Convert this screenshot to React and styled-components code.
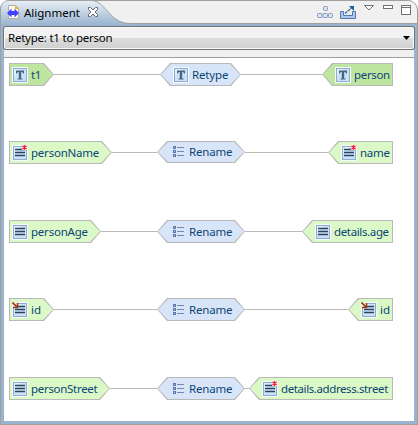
import React from "react";
import styled, { createGlobalStyle } from "styled-components";

const Global = createGlobalStyle`
  * { box-sizing: border-box; }
  body { margin: 0; background: #fff; overflow: hidden; }
  svg { display: block; flex: none; }
`;

const Frame = styled.main`
  width: 418px;
  height: 425px;
  display: flex;
  flex-direction: column;
  padding: 0 3px 3px;
  border: 1px solid #a0a0a0;
  border-top: 0;
  border-radius: 9px 10px 0 0;
  background: #99b4d1;
  font: 11.5px/16px "Noto Sans", "Open Sans", sans-serif;
  overflow: hidden;
`;

const Header = styled.header`
  height: 24px;
  flex: none;
  margin: 0 -3px;
  display: flex;
  justify-content: space-between;
  background: #f0f0f0;
  border-top: 1px solid #a0a0a0;
  border-bottom: 1px solid #a0a0a0;
  border-radius: 8px 9px 0 0;
`;

const Tab = styled.div`
  position: relative;
  display: flex;
  width: 132px;
  height: 23px;
  padding: 4px 0 0 6px;
`;

const TabShape = styled.svg`
  position: absolute;
  left: -1px;
  top: -1px;
`;

const TabIcon = styled.svg`
  position: relative;
`;

const TabTitle = styled.span`
  position: relative;
  width: 57px;
  margin: 0 6px 0 4px;
  white-space: nowrap;
`;

const Tools = styled.nav`
  display: flex;
`;

const Combo = styled.div`
  height: 24px;
  flex: none;
  margin: 2px -1px 0;
  padding: 0 4px 0 4px;
  display: flex;
  align-items: center;
  justify-content: space-between;
  border: 1px solid #707070;
  border-radius: 3px;
  box-shadow: inset 0 0 0 1px #fafafa;
  background: linear-gradient(#f2f2f2 0 48%, #dddddd 52%, #cfcfcf);
  color: #000;
`;

const ComboText = styled.span`
  letter-spacing: -0.23px;
`;

const Strip = styled.div`
  height: 8px;
  flex: none;
  background: #f0f0f0;
  border-bottom: 1px solid #a0a0a0;
`;

const Canvas = styled.section`
  flex: 1;
  display: grid;
  grid-template-rows: 78px 79px 78px 79px 23px;
  align-content: start;
  padding: 5px 21px 0 5px;
  background: #fff;
`;

const Row = styled.div`
  display: flex;
  align-items: flex-start;
`;

const Line = styled.i`
  flex: 1;
  height: 0;
  margin-top: 11px;
  border-top: 1px ${(p) => (p.$dashed ? "dashed" : "solid")} #b9b9b9;
`;

const outlines = {
  left: "polygon(0 0, calc(100% - 10px) 0, 100% 50%, calc(100% - 10px) 100%, 0 100%)",
  middle:
    "polygon(10px 0, calc(100% - 10px) 0, 100% 50%, calc(100% - 10px) 100%, 10px 100%, 0 50%)",
  right: "polygon(10px 0, 100% 0, 100% 100%, 10px 100%, 0 50%)",
};

const fills = { type: "#bfe6a0", property: "#dbf9c7", cell: "#d8e5f9" };
const starts = { left: 3, middle: 13, right: 13 };

const Node = styled.div`
  position: relative;
  flex: none;
  display: flex;
  align-items: center;
  width: ${(p) => p.$width}px;
  height: ${(p) => p.$height || 23}px;
  padding-left: ${(p) => starts[p.$side]}px;
  background: #b9b9b9;
  clip-path: ${(p) => outlines[p.$side]};
  color: #0d4575;

  &::before {
    content: "";
    position: absolute;
    inset: 1px;
    background: ${(p) => fills[p.$fill]};
    clip-path: ${(p) => outlines[p.$side]};
  }
`;

const NodeIcon = styled.svg`
  position: relative;
`;

const Label = styled.span`
  position: relative;
  margin-left: 3px;
  white-space: nowrap;
  letter-spacing: ${(p) => p.$spacing}px;
`;

function Glyph({ kind }) {
  if (kind === "list") {
    return (
      <NodeIcon width="16" height="16" shapeRendering="crispEdges">
        {[2, 6, 10].map((y) => (
          <React.Fragment key={y}>
            <rect x="3" y={y} width="3" height="3" fill="#5c78ac" />
            <rect x="4" y={y + 1} width="1" height="1" fill="#a9bfe0" />
            <rect x="7" y={y + 1} width="7" height="1" fill="#7189b6" />
          </React.Fragment>
        ))}
      </NodeIcon>
    );
  }
  return (
    <NodeIcon width="16" height="16">
      <rect width="16" height="16" fill="#f9fcff" />
      <rect x="1.5" y="1.5" width="13" height="13" fill="#cce2f7" stroke="#8fabd2" />
      <path d="M2 2H9L2 9Z" fill="#e3f0fc" />
      {kind === "type" ? (
        <path
          d="M4 3.5H12V6.5H11L10.3 4.9H9.2V11.5H10.5V12.5H5.5V11.5H6.8V4.9H5.7L5 6.5H4Z"
          fill="#456683"
        />
      ) : (
        <path d="M3 4.5H13M3 7.5H13M3 10.5H13" stroke="#2c435f" strokeWidth="1.5" />
      )}
      {kind === "required" && (
        <g>
          <rect x="10" y="0" width="6" height="5" fill="#ffe8ec" />
          <path d="M12.5 0V5M10.4 1L14.6 4M14.6 1L10.4 4" stroke="#ef2140" strokeWidth="1.2" />
        </g>
      )}
      {kind === "attribute" && (
        <g>
          <path d="M0 0H6V6H0Z" fill="#f7eee6" />
          <path d="M.5 .5L5 5M1 5.5H5.5V1" fill="none" stroke="#963b13" strokeWidth="1.6" />
        </g>
      )}
    </NodeIcon>
  );
}

const spacings = {
  t1: -0.4,
  Retype: -0.17,
  Rename: -0.2,
  person: -0.33,
  personName: -0.22,
  personAge: -0.22,
  personStreet: -0.3,
  name: -0.3,
  "details.age": -0.36,
  "details.address.street": -0.4,
};

function Part({ side, fill, width, height, icon, text }) {
  return (
    <Node $side={side} $fill={fill} $width={width} $height={height}>
      <Glyph kind={icon} />
      <Label $spacing={spacings[text] || 0}>{text}</Label>
    </Node>
  );
}

const rows = [
  { fill: "type", left: ["t1", "type", 45], cell: ["Retype", "type", 81], right: ["person", "type", 71] },
  { fill: "property", left: ["personName", "required", 103], cell: ["Rename", "list", 88, 22], right: ["name", "required", 65] },
  { fill: "property", left: ["personAge", "property", 92], cell: ["Rename", "list", 88], right: ["details.age", "property", 91] },
  { fill: "property", left: ["id", "attribute", 45], cell: ["Rename", "list", 88], right: ["id", "attribute", 45] },
  { fill: "property", left: ["personStreet", "property", 101], cell: ["Rename", "list", 88], right: ["details.address.street", "required", 144], dashed: true },
];

const Lead = styled.div`
  display: flex;
  width: ${(p) => p.$width}px;
`;

function Mapping({ row }) {
  const { left, cell, right, fill, dashed } = row;
  return (
    <Row>
      <Lead $width={cell[0] === "Retype" ? 151 : 148}>
        <Part side="left" fill={fill} text={left[0]} icon={left[1]} width={left[2]} />
        <Line />
      </Lead>
      <Part side="middle" fill="cell" text={cell[0]} icon={cell[1]} width={cell[2]} height={cell[3]} />
      <Line $dashed={dashed} />
      <Part side="right" fill={fill} text={right[0]} icon={right[1]} width={right[2]} />
    </Row>
  );
}

export default function App() {
  return (
    <>
      <Global />
      <Frame>
        <Header>
          <Tab>
            <TabShape width="134" height="25">
              <defs>
                <linearGradient id="tab" x2="0" y2="1">
                  <stop stopColor="#e9eff6" />
                  <stop offset="1" stopColor="#99b4d1" />
                </linearGradient>
              </defs>
              <path
                d="M0 25V9Q1 .5 9 .5H91C106 .5 109 23.5 130 23.5H134V25Z"
                fill="url(#tab)"
              />
              <path d="M.5 25V9Q1 .5 9 .5H91C106 .5 109 23.5 130 23.5H134" fill="none" stroke="#a0a0a0" />
            </TabShape>
            <TabIcon width="13" height="16">
              <path d="M1.5 .5H8.5L11.5 3.5V13.5H1.5Z" fill="#fafaf3" stroke="#b3ae94" />
              <path d="M8 0L12 4H8Z" fill="#dfb850" />
              <path d="M0 8L4.5 3.5V6H7.5V3.5L12 8L7.5 12.5V10H4.5V12.5Z" fill="#4141ff" />
            </TabIcon>
            <TabTitle>Alignment</TabTitle>
            <TabIcon width="12" height="14">
              <path
                d="M1.5 2.5H3.5L6 5L8.5 2.5H10.5V4.5L8 7L10.5 9.5V11.5H8.5L6 9L3.5 11.5H1.5V9.5L4 7L1.5 4.5Z"
                fill="#fff"
                stroke="#686868"
              />
            </TabIcon>
          </Tab>
          <Tools>
            <svg width="102" height="22">
              <g fill="#dce6f5" stroke="#8199bd">
                <rect x="8.5" y="5.5" width="4" height="4" rx="1" />
                <rect x="2.5" y="12.5" width="4.5" height="4" rx="1" />
                <rect x="8" y="12.5" width="4.5" height="4" rx="1" />
                <rect x="13.5" y="12.5" width="4" height="4" rx="1" />
              </g>
              <path
                d="M25.5 10.5H28.5V14.5H37.5V10.5H40.5V17.5H25.5Z"
                fill="#abc8ee"
                stroke="#5678b0"
              />
              <path d="M30 12.5L37 6.5" stroke="#286291" strokeWidth="1.2" strokeDasharray="3 .6" />
              <path d="M34 5H39V10Z" fill="#1c6094" />
              <path d="M49.5 4.5H58.5L54 9Z" fill="#fff" stroke="#707070" />
              <rect x="68.5" y="4.5" width="9" height="3" fill="#fff" stroke="#707070" />
              <rect x="86.5" y="4.5" width="9" height="9" fill="#fff" stroke="#707070" />
              <path d="M86 6.5H96" stroke="#707070" />
            </svg>
          </Tools>
        </Header>
        <Combo>
          <ComboText>Retype: t1 to person</ComboText>
          <svg width="7" height="4">
            <path d="M0 0H7L3.5 4Z" fill="#000" />
          </svg>
        </Combo>
        <Strip />
        <Canvas>
          {rows.map((row, i) => (
            <Mapping key={i} row={row} />
          ))}
        </Canvas>
      </Frame>
    </>
  );
}
